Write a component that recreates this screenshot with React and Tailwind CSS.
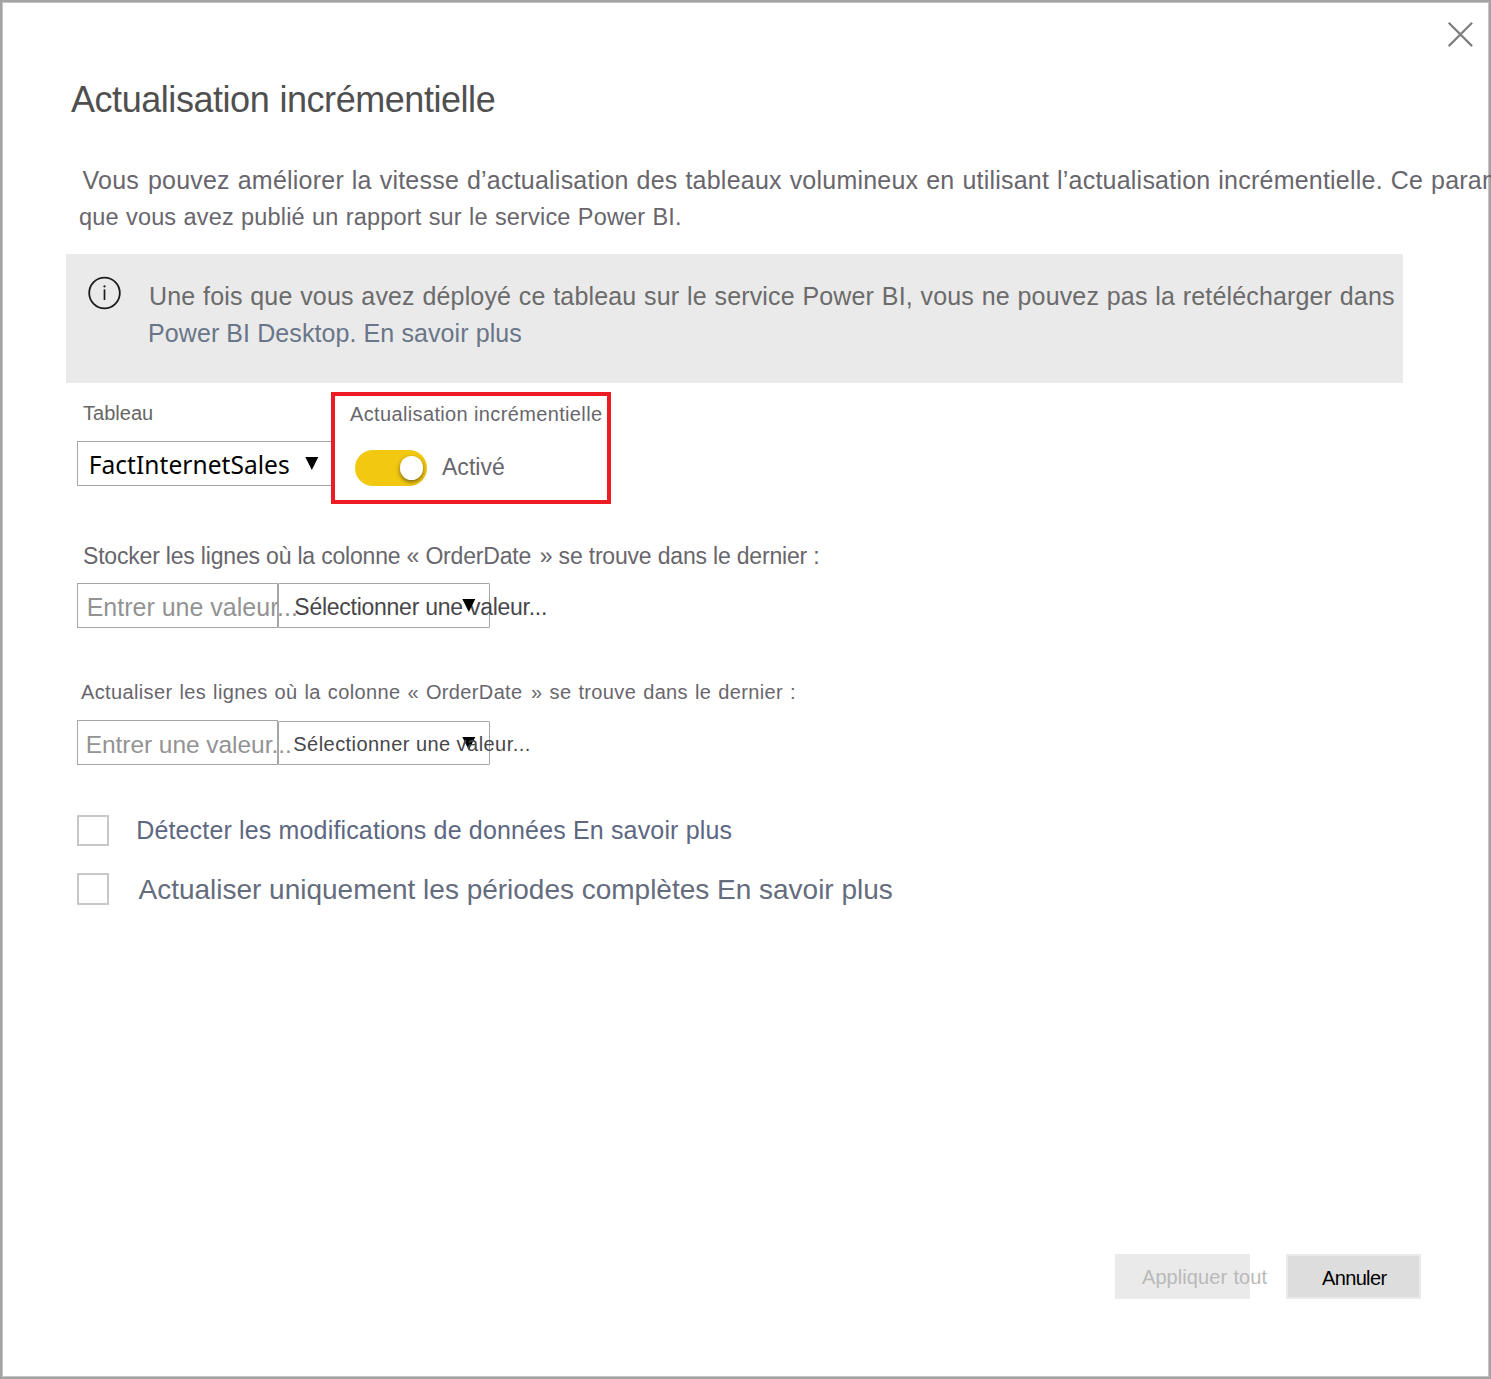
import React from "react";

const Triangle = ({ className }) => (
  <svg className={className} width="14" height="13" viewBox="0 0 14 13" aria-hidden="true">
    <path d="M0.3 0H13.3L6.8 13Z" fill="#000" />
  </svg>
);

function CloseIcon() {
  return (
    <svg width="26" height="26" viewBox="0 0 26 26" aria-hidden="true">
      <path d="M1.7 1.7L25.1 25.1M25.1 1.7L1.7 25.1" stroke="#7f7f7f" strokeWidth="2.2" fill="none" />
    </svg>
  );
}

function InfoIcon() {
  return (
    <svg width="34" height="34" viewBox="0 0 34 34" aria-hidden="true">
      <circle cx="16.5" cy="17" r="15.3" stroke="#1c1c1c" strokeWidth="1.8" fill="none" />
      <path d="M16.5 13.4V24" stroke="#1c1c1c" strokeWidth="1.7" />
      <circle cx="16.5" cy="10.4" r="1.1" fill="#1c1c1c" />
    </svg>
  );
}

function Banner() {
  return (
    <div className="mt-[18px] ml-[63px] flex h-[129px] w-[1337px] bg-[#eaeaea] pt-[22px] pl-[22px]">
      <InfoIcon />
      <p className="mt-[2px] ml-[27px] whitespace-nowrap text-[25px] leading-[37px]">
        <span className="block tracking-[0.155px] text-[#6b6b6b] [word-spacing:0.615px]">
          Une fois que vous avez déployé ce tableau sur le service Power BI, vous ne pouvez pas la retélécharger dans
        </span>
        <span className="-ml-[1px] block tracking-[0.09px] text-[#697588]">
          Power BI Desktop. En savoir plus
        </span>
      </p>
    </div>
  );
}

function TableSelect() {
  return (
    <div className="w-[254px]">
      <div className="ml-[6px] h-[40px] text-[20px] leading-[24px] tracking-[0.03px] text-[#666]">Tableau</div>
      <div className="flex h-[45px] rounded-l-[1px] border border-r-0 border-[#a6a6a6] pl-[10.7px]">
        <span className="w-[216px] font-['Noto_Sans',sans-serif] text-[24.5px] leading-[45px] tracking-[0.054px] text-black">
          FactInternetSales
        </span>
        <Triangle className="mt-[15px]" />
      </div>
    </div>
  );
}

function RefreshToggle() {
  return (
    <div className="-mt-[9px] h-[112px] w-[280px] border-4 border-[#ed1c24] pt-[6px] pl-[15px]">
      <div className="whitespace-nowrap text-[20px] leading-[24px] tracking-[0.36px] text-[#68666c]">
        Actualisation incrémentielle
      </div>
      <div className="mt-[24px] ml-[5px] flex items-start">
        <div className="flex h-[36px] w-[72px] items-center justify-end rounded-full bg-[#f2c811] pr-[4px]">
          <div className="size-[23.5px] rounded-full bg-white shadow-[0_2px_4px_rgba(0,0,0,0.5)]" />
        </div>
        <span className="ml-[15px] text-[23px] leading-[34px] tracking-[0.032px] text-[#68666c]">Activé</span>
      </div>
    </div>
  );
}

function Checkbox({ className }) {
  return <div className={`w-[32px] shrink-0 border-2 border-[#c8c8c8] ${className}`} />;
}

export default function App() {
  return (
    <div className="h-[1379px] w-[1491px] overflow-hidden bg-white font-['Liberation_Sans',Arial,sans-serif]">
      <div className="h-full border-2 border-[#a3a3a3]">
        <div className="flex h-full flex-col border border-[#c4c4c4]">
          <div className="flex h-[73px] shrink-0 justify-end pt-[18px] pr-[15px]">
            <CloseIcon />
          </div>

          <h1 className="ml-[68px] text-[36px] leading-[48px] tracking-[-0.45px] text-[#4f4f50] [word-spacing:0.6px]">
            Actualisation incrémentielle
          </h1>

          <p className="mt-[38px] ml-[79.5px] whitespace-nowrap text-[25px] leading-[36px] tracking-[0.22px] text-[#68666c] [word-spacing:0.75px]">
            <span className="mr-[1px]">Vous</span> pouvez améliorer la vitesse d’actualisation des tableaux volumineux
            en utilisant l’actualisation incrémentielle. Ce paramètre
          </p>
          <p className="ml-[76px] whitespace-nowrap text-[23.5px] leading-[38px] tracking-[0.178px] text-[#68666c] [word-spacing:0.5px]">
            que vous avez publié un rapport sur le service Power BI.
          </p>

          <Banner />

          <div className="mt-[18px] ml-[74px] flex h-[103px]">
            <TableSelect />
            <RefreshToggle />
          </div>

          <div className="mt-[38px] ml-[80px] whitespace-nowrap text-[23px] leading-[28px] tracking-[-0.19px] text-[#68666c]">
            Stocker les lignes où la colonne « <span className="mr-[2.5px]">OrderDate</span> » se trouve dans le dernier :
          </div>
          <div className="mt-[13px] ml-[74px] flex h-[45px] whitespace-nowrap">
            <div className="w-[201px] border border-[#a6a6a6] pl-[8.7px] text-[25px] leading-[47px] text-[#939393]">
              Entrer une valeur...
            </div>
            <div className="relative w-[212px] rounded-[1px] border border-[#a6a6a6] pl-[15.3px] text-[23px] leading-[46px] tracking-[-0.26px] text-[#47464b]">
              Sélectionner une valeur...
              <Triangle className="absolute top-[15px] left-[183px]" />
            </div>
          </div>

          <div className="mt-[52px] ml-[78px] whitespace-nowrap text-[20px] leading-[24px] tracking-[0.36px] text-[#68666c] [word-spacing:1.1px]">
            Actualiser les lignes où la colonne « <span className="mr-[1.5px]">OrderDate</span> » se trouve dans le dernier :
          </div>
          <div className="mt-[16px] ml-[74px] flex h-[45px] items-end whitespace-nowrap">
            <div className="h-[45px] w-[201px] border border-[#a6a6a6] pl-[7.7px] text-[24.5px] leading-[47px] tracking-[-0.05px] text-[#939393]">
              Entrer une valeur...
            </div>
            <div className="relative h-[44px] w-[212px] rounded-[1px] border border-[#a6a6a6] pl-[14.3px] text-[20px] leading-[44px] tracking-[0.45px] text-[#47464b]">
              <Triangle className="absolute top-[15px] left-[183px]" />
              <span className="relative">Sélectionner une valeur...</span>
            </div>
          </div>

          <div className="mt-[50px] ml-[74px] flex">
            <Checkbox className="h-[31px]" />
            <span className="-mt-[3px] ml-[27.2px] text-[25px] leading-[36px] tracking-[0.157px] text-[#5d6782]">
              Détecter les modifications de données En savoir plus
            </span>
          </div>
          <div className="mt-[25px] ml-[74px] flex h-[32px]">
            <Checkbox className="h-[32px]" />
            <span className="-mt-[1px] ml-[29.5px] text-[28px] leading-[35px] tracking-[-0.01px] text-[#646c7e]">
              Actualiser uniquement les périodes complètes En savoir plus
            </span>
          </div>

          <div className="mt-auto mr-[67px] mb-[77px] flex justify-end gap-[36px] text-[20px] whitespace-nowrap">
            <div className="h-[45px] w-[135px] bg-[#eaeaea] pl-[27px] leading-[46px] tracking-[0.08px] text-[#b9b9b9] [word-spacing:0.6px]">
              Appliquer tout
            </div>
            <div className="h-[45px] w-[135px] border-2 border-[#eaeaea] bg-[#dddddd] pl-[34px] leading-[44px] tracking-[-0.65px] text-black">
              Annuler
            </div>
          </div>
        </div>
      </div>
    </div>
  );
}
